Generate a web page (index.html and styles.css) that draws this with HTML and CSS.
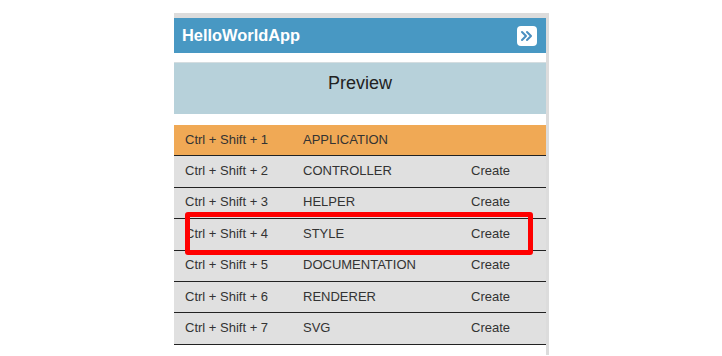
FILE: index.html
```html
<!DOCTYPE html>
<html>
<head>
<meta charset="utf-8">
<link rel="stylesheet" href="styles.css">
</head>
<body>
<div class="frame">
  <div class="panel">
    <div class="header">
      <span class="title">HelloWorldApp</span>
      <span class="toggle">
        <svg width="14" height="12" viewBox="0 0 14 12"><path d="M2 2 L6 6 L2 10 M7 2 L11 6 L7 10" fill="none" stroke="#4a8fc0" stroke-width="2" stroke-linecap="round" stroke-linejoin="round"/></svg>
      </span>
    </div>
    <div class="preview">Preview</div>
    <div class="rows">
      <div class="row active"><span class="key">Ctrl + Shift + 1</span><span class="name">APPLICATION</span><span class="act"></span></div>
      <div class="row"><span class="key">Ctrl + Shift + 2</span><span class="name">CONTROLLER</span><span class="act">Create</span></div>
      <div class="row"><span class="key">Ctrl + Shift + 3</span><span class="name">HELPER</span><span class="act">Create</span></div>
      <div class="row"><span class="key">Ctrl + Shift + 4</span><span class="name">STYLE</span><span class="act">Create</span></div>
      <div class="row"><span class="key">Ctrl + Shift + 5</span><span class="name">DOCUMENTATION</span><span class="act">Create</span></div>
      <div class="row"><span class="key">Ctrl + Shift + 6</span><span class="name">RENDERER</span><span class="act">Create</span></div>
      <div class="row"><span class="key">Ctrl + Shift + 7</span><span class="name">SVG</span><span class="act">Create</span></div>
    </div>
  </div>
  <div class="highlight"></div>
</div>
</body>
</html>
```
FILE: styles.css
```css
html, body {
  margin: 0;
  padding: 0;
  background: #ffffff;
  font-family: "Liberation Sans", Arial, sans-serif;
}
.frame {
  position: relative;
  margin: 13px 0 0 174px;
  width: 375px;
}
.panel {
  width: 372px;
  border-top: 5px solid #dcdcdc;
  border-right: 3px solid #dcdcdc;
  background: #ffffff;
  padding-bottom: 10px;
}
.header {
  height: 35px;
  background: #4898c3;
  display: flex;
  align-items: center;
  justify-content: space-between;
  padding: 0 9px 0 8px;
}
.title {
  color: #ffffff;
  font-weight: bold;
  font-size: 16.4px;
}
.toggle {
  width: 20px;
  height: 20px;
  background: #ffffff;
  border-radius: 4px;
  display: flex;
  align-items: center;
  justify-content: center;
}
.preview {
  margin-top: 9px;
  height: 52px;
  background: #b7d1da;
  border-top: 1px solid #d4dde0;
  box-sizing: border-box;
  display: flex;
  align-items: center;
  justify-content: center;
  font-size: 18px;
  color: #222;
  padding-bottom: 11px;
}
.rows {
  margin-top: 11px;
}
.row {
  height: 31.4px;
  box-sizing: border-box;
  background: #e0e0e0;
  border-bottom: 1.5px solid #222;
  display: flex;
  align-items: center;
  font-size: 13px;
  color: #333;
  padding-bottom: 2px;
}
.row.active {
  background: #f0a955;
}
.key {
  width: 118px;
  padding-left: 11px;
}
.name {
  width: 168px;
}
.highlight {
  position: absolute;
  left: 11px;
  top: 199px;
  width: 348px;
  height: 43px;
  box-sizing: border-box;
  border: 5px solid #ff0000;
  border-radius: 3px;
}
```
